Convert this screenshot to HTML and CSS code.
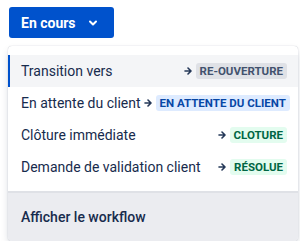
FILE: index.html
```html
<!DOCTYPE html>
<html lang="fr">
<head>
  <meta charset="UTF-8">
  <title>Transitions</title>
  <link rel="stylesheet" href="styles.css">
</head>
<body>
  <button class="status-button">
    En cours
    <svg class="chevron" width="10" height="10" viewBox="0 0 10 10">
      <path d="M2 3.5 5 6.5 8 3.5" fill="none" stroke="currentColor" stroke-width="2" stroke-linecap="round" stroke-linejoin="round"/>
    </svg>
  </button>

  <div class="menu">
    <ul class="menu-list">
      <li class="menu-item active">
        <span class="label">Transition vers</span>
        <span class="target">
          <svg class="arrow" width="8" height="10" viewBox="0 0 8 10"><path d="M1 5h5.5M4 2l3 3-3 3" fill="none" stroke="currentColor" stroke-width="1.6" stroke-linecap="round" stroke-linejoin="round"/></svg>
          <span class="lozenge grey">RE-OUVERTURE</span>
        </span>
      </li>
      <li class="menu-item">
        <span class="label">En attente du client</span>
        <span class="target">
          <svg class="arrow" width="8" height="10" viewBox="0 0 8 10"><path d="M1 5h5.5M4 2l3 3-3 3" fill="none" stroke="currentColor" stroke-width="1.6" stroke-linecap="round" stroke-linejoin="round"/></svg>
          <span class="lozenge blue">EN ATTENTE DU CLIENT</span>
        </span>
      </li>
      <li class="menu-item">
        <span class="label">Clôture immédiate</span>
        <span class="target">
          <svg class="arrow" width="8" height="10" viewBox="0 0 8 10"><path d="M1 5h5.5M4 2l3 3-3 3" fill="none" stroke="currentColor" stroke-width="1.6" stroke-linecap="round" stroke-linejoin="round"/></svg>
          <span class="lozenge green">CLOTURE</span>
        </span>
      </li>
      <li class="menu-item">
        <span class="label">Demande de validation client</span>
        <span class="target">
          <svg class="arrow" width="8" height="10" viewBox="0 0 8 10"><path d="M1 5h5.5M4 2l3 3-3 3" fill="none" stroke="currentColor" stroke-width="1.6" stroke-linecap="round" stroke-linejoin="round"/></svg>
          <span class="lozenge green">RÉSOLUE</span>
        </span>
      </li>
    </ul>
    <div class="menu-footer">Afficher le workflow</div>
  </div>
</body>
</html>
```

FILE: styles.css
```css
body {
  margin: 0;
  padding: 7px 2px 0 8px;
  font-family: Roboto, "Noto Sans", Arial, sans-serif;
  font-size: 14px;
  color: #172b4d;
  background: #fff;
}

.status-button {
  display: flex;
  align-items: center;
  gap: 12px;
  margin-left: 1px;
  height: 31px;
  width: 105px;
  padding: 0 0 0 12px;
  border: none;
  border-radius: 3px;
  background-color: #0052cc;
  color: #fff;
  font-family: inherit;
  font-size: 14px;
  font-weight: 700;
}

.menu {
  margin-top: 8px;
  height: 195px;
  border-radius: 4px;
  background: #fff;
  box-shadow: 0 4px 8px -2px rgba(9, 30, 66, 0.25), 0 0 1px rgba(9, 30, 66, 0.31);
  overflow: hidden;
  display: flex;
  flex-direction: column;
}

.menu-list {
  list-style: none;
  margin: 0;
  padding: 9px 0 8px;
}

.menu-item {
  display: flex;
  align-items: center;
  justify-content: space-between;
  gap: 3px;
  height: 32px;
  padding: 0 11px 0 13px;
  white-space: nowrap;
}

.menu-item.active {
  background-color: #f4f5f7;
  box-shadow: inset 2px 0 0 #0052cc;
}

.target {
  display: flex;
  align-items: center;
  gap: 4px;
}

.arrow {
  color: #253858;
}

.lozenge {
  padding: 1px 4px;
  border-radius: 3px;
  font-size: 11.5px;
  font-weight: 700;
  line-height: 14px;
}

.grey {
  background-color: #dfe1e6;
  color: #42526e;
}

.blue {
  background-color: #deebff;
  color: #0747a6;
}

.green {
  background-color: #e3fcef;
  color: #006644;
}

.menu-footer {
  flex: 1;
  display: flex;
  align-items: center;
  padding-left: 13px;
  border-top: 2px solid #dfe1e6;
  background-color: #ebecf0;
  font-weight: 500;
}
```
